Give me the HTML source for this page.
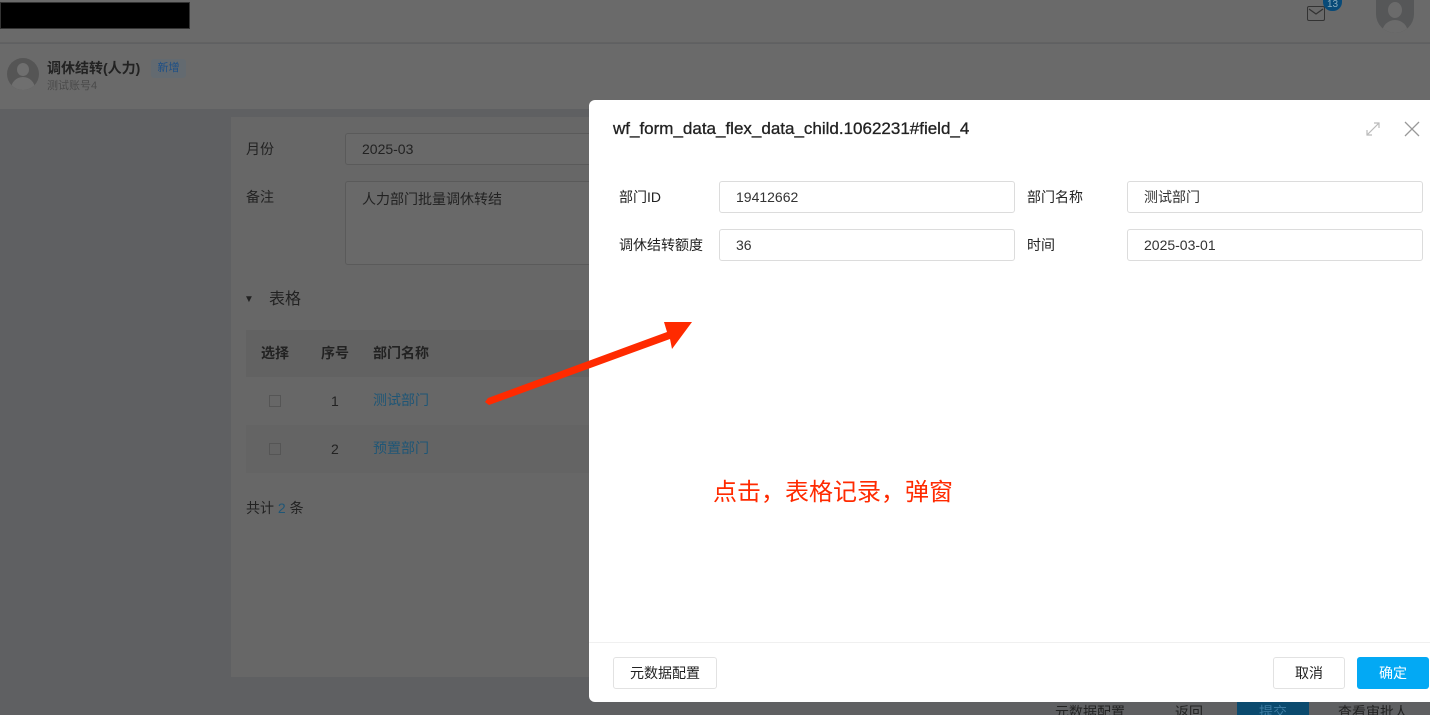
<!DOCTYPE html>
<html><head><meta charset="utf-8"><style>
*{margin:0;padding:0;box-sizing:border-box}
body{width:1430px;height:715px;overflow:hidden;position:relative;background:#5f6062;font-family:"Liberation Sans","Noto Sans CJK SC",sans-serif;color:#222}
.abs{position:absolute}
.t{font-size:14px;line-height:16px}
.inp{position:absolute;border:1px solid #dcdcdc;border-radius:3px;background:#fff;font-size:14px;color:#333;padding-left:16px;line-height:30px}
</style></head><body>
<div class="abs" style="left:0;top:0;width:1430px;height:43px;background:#6a6a6a;border-bottom:1px solid #626262"></div>
<div class="abs" style="left:0;top:2px;width:190px;height:27px;background:#000;border:1px solid #333"></div>
<div class="abs" style="left:1307px;top:6px;width:18px;height:15px;border:1.5px solid #333;border-radius:2px"></div>
<svg class="abs" style="left:1308px;top:8px" width="16" height="8"><path d="M1 1 L8 6 L15 1" stroke="#333" fill="none" stroke-width="1.3"/></svg>
<div class="abs" style="left:1323px;top:0;width:19px;height:11px;background:#084a78;border-radius:0 0 9px 9px;color:#8ab;font-size:10px;text-align:center;line-height:9px">13</div>
<div class="abs" style="left:1376px;top:0;width:38px;height:33px;background:#565758;border-radius:0 0 19px 19px;overflow:hidden"><div style="position:absolute;left:12px;top:2px;width:14px;height:16px;border-radius:50%;background:#6b6b6b"></div><div style="position:absolute;left:6px;top:20px;width:26px;height:16px;border-radius:13px 13px 0 0;background:#6b6b6b"></div></div>
<div class="abs" style="left:0;top:44px;width:1430px;height:65px;background:#6a6a6a"></div>
<div class="abs" style="left:7px;top:58px;width:32px;height:32px;border-radius:50%;background:#555;overflow:hidden"><div style="position:absolute;left:10px;top:5px;width:12px;height:13px;border-radius:50%;background:#6f6f6f"></div><div style="position:absolute;left:4px;top:19px;width:24px;height:16px;border-radius:12px 12px 0 0;background:#6f6f6f"></div></div>
<div class="abs" style="left:47px;top:59px;font-size:14px;line-height:18px;font-weight:bold;color:#222">调休结转(人力)</div>
<div class="abs" style="left:151px;top:59px;width:35px;height:19px;background:#636a70;border-radius:3px;color:#1d4f86;font-size:11px;text-align:center;line-height:19px">新增</div>
<div class="abs" style="left:47px;top:79px;font-size:11px;line-height:14px;color:#4a4a4a">测试账号4</div>
<div class="abs" style="left:231px;top:117px;width:400px;height:560px;background:#676767"></div>
<div class="abs t" style="left:246px;top:141px;color:#222">月份</div>
<div class="abs" style="left:345px;top:133px;width:260px;height:32px;border:1px solid #5a5a5a;border-radius:3px;background:#696969;font-size:14px;padding-left:16px;line-height:30px;color:#222">2025-03</div>
<div class="abs t" style="left:246px;top:189px">备注</div>
<div class="abs" style="left:345px;top:181px;width:260px;height:84px;border:1px solid #5a5a5a;border-radius:3px;background:#696969;font-size:14px;line-height:18px;padding:8px 16px;color:#222">人力部门批量调休转结</div>
<div class="abs" style="left:244px;top:294px;font-size:10px;line-height:12px;color:#222">▼</div>
<div class="abs" style="left:269px;top:291px;font-size:16px;line-height:18px;color:#222">表格</div>
<div class="abs" style="left:246px;top:330px;width:360px;height:47px;background:#626262"></div>
<div class="abs t" style="left:261px;top:345px;font-weight:bold;color:#222">选择</div>
<div class="abs t" style="left:321px;top:345px;font-weight:bold;color:#222">序号</div>
<div class="abs t" style="left:373px;top:345px;font-weight:bold;color:#222">部门名称</div>
<div class="abs" style="left:246px;top:425px;width:360px;height:48px;background:#646464"></div>
<div class="abs" style="left:269px;top:395px;width:12px;height:12px;border:1px solid #555"></div>
<div class="abs" style="left:269px;top:443px;width:12px;height:12px;border:1px solid #555"></div>
<div class="abs t" style="left:331px;top:393px">1</div>
<div class="abs t" style="left:331px;top:441px">2</div>
<div class="abs t" style="left:373px;top:392px;color:#1f5676">测试部门</div>
<div class="abs t" style="left:373px;top:440px;color:#1f5676">预置部门</div>
<div class="abs t" style="left:246px;top:500px">共计 <span style="color:#1f5676">2</span> 条</div>
<div class="abs" style="left:0;top:698px;width:1430px;height:17px;background:#5f6062"></div>
<div class="abs" style="left:1040px;top:702px;width:385px;height:13px;font-size:14px;color:#222;overflow:hidden;line-height:20px">
<span style="position:absolute;left:15px">元数据配置</span><span style="position:absolute;left:135px">返回</span><span style="position:absolute;left:197px;width:72px;height:20px;background:#0b4a6e;color:#3c7aa0;text-align:center">提交</span><span style="position:absolute;left:298px">查看审批人</span></div>
<div class="abs" style="left:589px;top:100px;width:841px;height:602px;background:#fff;border-radius:6px 0 0 6px"></div>
<div class="abs" style="left:613px;top:119px;font-size:17px;line-height:20px;color:#222;-webkit-text-stroke:0.3px #222">wf_form_data_flex_data_child.1062231#field_4</div>
<svg class="abs" style="left:1364px;top:120px" width="18" height="18"><path d="M3 15 L15 3 M10 3 H15 V8 M3 10 V15 H8" stroke="#bbb" fill="none" stroke-width="1.2"/></svg>
<svg class="abs" style="left:1404px;top:121px" width="16" height="16"><path d="M1 1 L15 15 M15 1 L1 15" stroke="#999" stroke-width="1.3"/></svg>
<div class="abs t" style="left:619px;top:189px">部门ID</div>
<div class="inp" style="left:719px;top:181px;width:296px;height:32px">19412662</div>
<div class="abs t" style="left:1027px;top:189px">部门名称</div>
<div class="inp" style="left:1127px;top:181px;width:296px;height:32px">测试部门</div>
<div class="abs t" style="left:619px;top:237px">调休结转额度</div>
<div class="inp" style="left:719px;top:229px;width:296px;height:32px">36</div>
<div class="abs t" style="left:1027px;top:237px">时间</div>
<div class="inp" style="left:1127px;top:229px;width:296px;height:32px">2025-03-01</div>
<div class="abs" style="left:713px;top:479px;font-size:24px;line-height:28px;color:#ff2a00">点击，表格记录，弹窗</div>
<div class="abs" style="left:589px;top:642px;width:841px;height:1px;background:#f0f0f0"></div>
<div class="abs" style="left:613px;top:657px;width:104px;height:32px;border:1px solid #e2e2e2;border-radius:3px;font-size:14px;text-align:center;line-height:30px">元数据配置</div>
<div class="abs" style="left:1273px;top:657px;width:72px;height:32px;border:1px solid #e2e2e2;border-radius:3px;font-size:14px;text-align:center;line-height:30px">取消</div>
<div class="abs" style="left:1357px;top:657px;width:72px;height:32px;background:#03a9f4;border-radius:3px;font-size:14px;text-align:center;line-height:32px;color:#fff">确定</div>
<svg class="abs" style="left:0;top:0" width="1430" height="715"><path d="M485 402 L488 398 L667 332 L664 322 L692 322 L672 349 L670 339 L489 405 Z" fill="#ff2a00"/></svg>
</body></html>
